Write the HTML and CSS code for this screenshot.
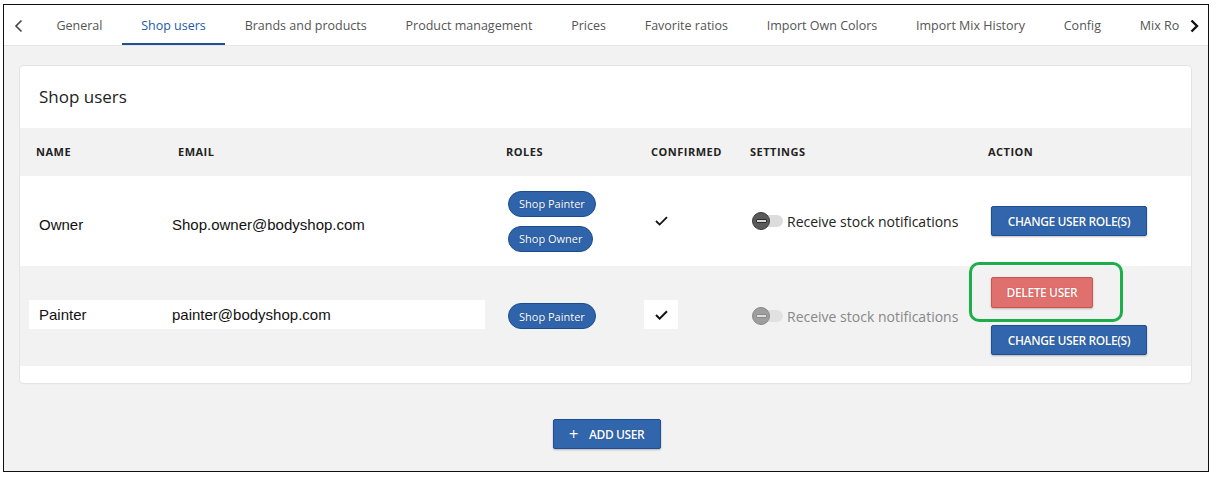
FILE: index.html
```html
<!DOCTYPE html>
<html>
<head>
<meta charset="utf-8">
<link rel="stylesheet" href="styles.css">
</head>
<body>
<div class="frame">
  <nav class="tabbar">
    <span class="chev chev-left"><svg width="10" height="14" viewBox="0 0 10 14"><path d="M7.5 1.5 L2 7 L7.5 12.5" fill="none" stroke="#444" stroke-width="1.6"/></svg></span>
    <div class="tabs">
      <span class="tab">General</span>
      <span class="tab active">Shop users</span>
      <span class="tab">Brands and products</span>
      <span class="tab">Product management</span>
      <span class="tab">Prices</span>
      <span class="tab">Favorite ratios</span>
      <span class="tab">Import Own Colors</span>
      <span class="tab">Import Mix History</span>
      <span class="tab">Config</span>
      <span class="tab tab-last">Mix Ro</span>
    </div>
    <span class="chev chev-right"><svg width="10" height="14" viewBox="0 0 10 14"><path d="M2.5 1.5 L8 7 L2.5 12.5" fill="none" stroke="#111" stroke-width="2.4"/></svg></span>
  </nav>
  <main class="content">
    <section class="card">
      <h2 class="card-title">Shop users</h2>
      <div class="grid head">
        <div class="h h-name">NAME</div>
        <div class="h h-email">EMAIL</div>
        <div class="h h-roles">ROLES</div>
        <div class="h h-conf">CONFIRMED</div>
        <div class="h h-set">SETTINGS</div>
        <div class="h h-act">ACTION</div>
      </div>
      <div class="grid row row-white">
        <div class="ident ident-low"><span class="name">Owner</span><span class="email">Shop.owner@bodyshop.com</span></div>
        <div class="roles">
          <span class="chip">Shop Painter</span>
          <span class="chip">Shop Owner</span>
        </div>
        <div class="conf"><span class="checkbox"><svg width="13" height="10" viewBox="0 0 13 10"><path d="M1 5 L4.6 8.6 L12 1.2" fill="none" stroke="#111" stroke-width="1.8"/></svg></span></div>
        <div class="settings">
          <span class="toggle"><span class="track"></span><span class="knob"><span class="minus"></span></span></span>
          <span class="toggle-label">Receive stock notifications</span>
        </div>
        <div class="action">
          <button class="btn btn-blue btn-role">CHANGE USER ROLE(S)</button>
        </div>
      </div>
      <div class="grid row row-gray">
        <div class="ident ident-high hl"><span class="name">Painter</span><span class="email">painter@bodyshop.com</span></div>
        <div class="roles">
          <span class="chip">Shop Painter</span>
        </div>
        <div class="conf"><span class="checkbox hl conf-high"><svg width="13" height="10" viewBox="0 0 13 10"><path d="M1 5 L4.6 8.6 L12 1.2" fill="none" stroke="#111" stroke-width="2"/></svg></span></div>
        <div class="settings disabled">
          <span class="toggle"><span class="track"></span><span class="knob"><span class="minus"></span></span></span>
          <span class="toggle-label">Receive stock notifications</span>
        </div>
        <div class="action stack">
          <div class="del-wrap">
            <button class="btn btn-red">DELETE USER</button>
            <span class="highlight-ring"></span>
          </div>
          <button class="btn btn-blue btn-role">CHANGE USER ROLE(S)</button>
        </div>
      </div>
      <div class="card-foot"></div>
    </section>
    <div class="add-wrap">
      <button class="btn btn-blue btn-add"><span class="plus">+</span>ADD USER</button>
    </div>
  </main>
</div>
</body>
</html>
```
FILE: styles.css
```css
* { box-sizing: border-box; }
html, body { margin: 0; padding: 0; background: #fff; }
body { padding: 4px 0 0 3px; font-family: "Open Sans", "Liberation Sans", sans-serif; }

.frame {
  width: 1206px;
  height: 468px;
  border: 1px solid #111;
  background: #f2f2f2;
  display: flex;
  flex-direction: column;
  overflow: hidden;
}

/* Tabs */
.tabbar {
  height: 41px;
  background: #fff;
  border-bottom: 1px solid #e6e6e6;
  display: flex;
  align-items: stretch;
  flex: none;
}
.chev { display: flex; align-items: center; justify-content: center; flex: none; padding-top: 2px; }
.chev-left { width: 33px; padding-right: 4px; }
.chev-right { width: 24px; padding-right: 5px; }
.tabs {
  flex: 1;
  display: flex;
  overflow: hidden;
  white-space: nowrap;
}
.tab {
  flex: none;
  padding: 2px 19.4px 0;
  font-size: 12.5px;
  color: #555;
  display: flex;
  align-items: center;
  border-bottom: 2px solid transparent;
}
.tab.active { color: #2459a6; border-bottom-color: #1f4f95; }
.tab-last { padding-right: 0; }

/* Content */
.content {
  flex: 1;
  padding: 20px 17px 0 16px;
}
.card {
  background: #fff;
  border-radius: 4px;
  box-shadow: 0 0 0 1px #e4e4e4, 0 1px 2px rgba(0,0,0,0.06);
}
.card-title {
  margin: 0;
  height: 62px;
  padding: 19px 0 0 19px;
  font-size: 17px;
  font-weight: 400;
  color: #222;
}
.grid {
  display: grid;
  grid-template-columns: 145px 329px 146px 98px 238px 1fr;
  align-items: center;
}
.head { height: 48px; background: #f2f2f2; }
.h {
  font-size: 11px;
  font-weight: 700;
  letter-spacing: 0.5px;
  color: #222;
  padding-bottom: 2px;
}
.h-name { padding-left: 16px; }
.h-email { padding-left: 13px; }
.h-roles { padding-left: 12px; }
.h-conf { padding-left: 11px; }
.h-set { padding-left: 12px; }
.h-act { padding-left: 12px; }

.row-white { height: 90px; background: #fff; }
.row-gray { height: 100px; background: #f2f2f2; }
.card-foot { height: 17px; }

.ident {
  grid-column: 1 / 3;
  margin-left: 9px;
  width: 456px;
  height: 29px;
  padding-left: 10px;
  display: flex;
  align-items: center;
  font-family: "Liberation Sans", Arial, sans-serif;
  font-size: 15px;
  color: #111;
}
.ident-low { margin-top: 6px; }
.ident-high { margin-top: -3px; }
.ident.hl { background: #fff; }
.ident .name { width: 133px; flex: none; }

.roles {
  padding-left: 14px;
  display: flex;
  flex-direction: column;
  align-items: flex-start;
  gap: 9px;
}
.chip {
  display: inline-flex;
  align-items: center;
  height: 26px;
  padding: 0 10px;
  border-radius: 13px;
  background: #2f64aa;
  border: 1px solid #1c4c8e;
  color: #fff;
  font-size: 11px;
  text-shadow: 0 0 1px #1a3f78;
}

.conf { padding-left: 4px; }
.checkbox {
  width: 34px;
  height: 29px;
  display: flex;
  align-items: center;
  justify-content: center;
}
.checkbox.hl { background: #fff; }
.conf-high { margin-top: -3px; }

.settings {
  padding-left: 14px;
  display: flex;
  align-items: center;
}
.toggle {
  position: relative;
  width: 32px;
  height: 18px;
  flex: none;
  margin-right: 3px;
}
.track {
  position: absolute;
  left: 4px;
  top: 3px;
  width: 27px;
  height: 12px;
  border-radius: 6px;
  background: #dcdcdc;
}
.knob {
  position: absolute;
  left: 0;
  top: 0;
  width: 18px;
  height: 18px;
  border-radius: 50%;
  background: #5a5a5a;
  border: 1px solid #3c3c3c;
  display: flex;
  align-items: center;
  justify-content: center;
}
.minus {
  width: 11px;
  height: 4px;
  border-radius: 1px;
  background: #d6d6d6;
  border: 1px solid #2e2e2e;
}
.toggle-label { font-size: 14px; color: #222; }
.settings.disabled .knob { background: #9e9e9e; border-color: #8a8a8a; }
.settings.disabled .minus { background: #dedede; border-color: #8a8a8a; }
.settings.disabled .track { background: #e1e1e1; }
.settings.disabled .toggle-label { color: #888; }

.action { padding-left: 15px; }
.action.stack {
  display: flex;
  flex-direction: column;
  align-items: flex-start;
  gap: 17px;
}
.del-wrap { position: relative; }
.highlight-ring {
  position: absolute;
  left: -22px;
  top: -15px;
  width: 154px;
  height: 60px;
  border: 3px solid #1bae4b;
  border-radius: 10px;
  pointer-events: none;
}

.btn {
  font-family: "Open Sans", sans-serif;
  font-size: 12px;
  font-weight: 600;
  letter-spacing: -0.4px;
  height: 30px;
  border-radius: 2px;
  color: #fff;
  display: inline-flex;
  align-items: center;
  justify-content: center;
  cursor: pointer;
  box-shadow: 0 1px 2px rgba(0,0,0,0.25);
}
.btn-blue {
  background: #3166ac;
  border: 1px solid #1d4f92;
  text-shadow: 0 0 1px #163f7a;
}
.btn-role { width: 156px; }
.btn-red {
  width: 102px;
  height: 31px;
  background: #e0706d;
  border: 1px solid #cc5450;
  text-shadow: 0 0 1px #b53a36;
}

.add-wrap {
  display: flex;
  justify-content: center;
  padding-top: 36px;
  padding-left: 2px;
}
.btn-add {
  width: 108px;
  font-size: 12px;
}
.plus {
  font-size: 17px;
  font-weight: 400;
  margin-right: 11px;
  margin-top: -2px;
}
```
